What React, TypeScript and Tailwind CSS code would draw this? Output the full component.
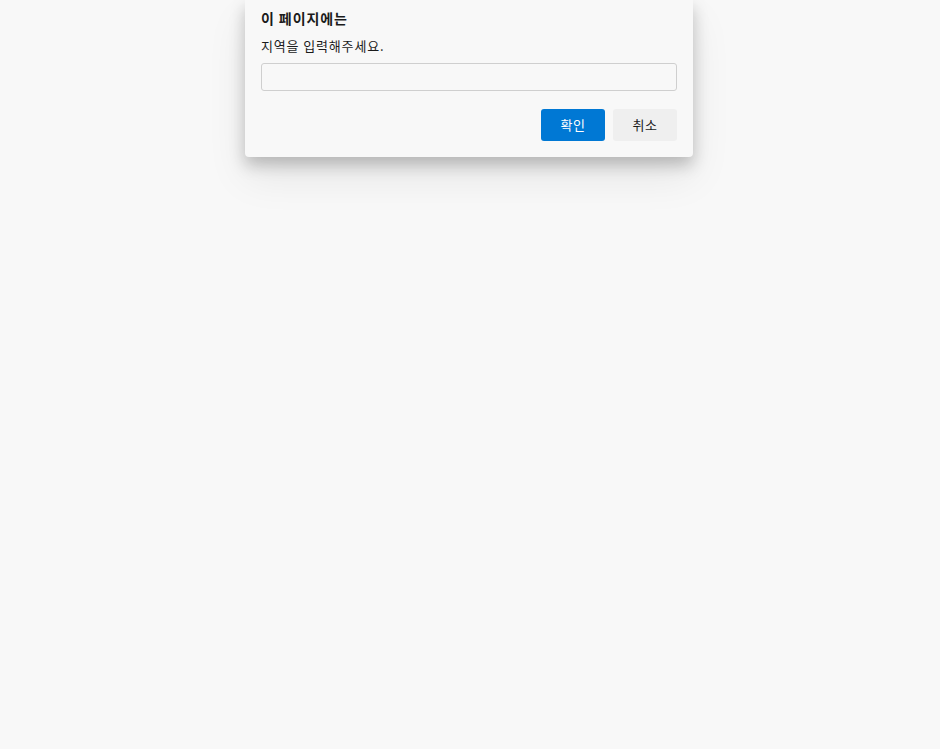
import React from 'react';

function App() {
    return (
        <div className="min-h-[749px] w-full bg-[#f8f8f8] flex justify-center" style={{ fontFamily: '"Noto Sans CJK KR", "Noto Sans", sans-serif' }}>
            <div className="w-[448px] h-[157px] bg-[#f8f8f8] rounded-b-[4px] px-4 pt-[8px] shadow-[0_8px_16px_rgba(0,0,0,0.22),0_20px_40px_rgba(0,0,0,0.08)] ml-[-2px]">
                <p className="text-[14px] font-bold text-[#1b1b1b] leading-[20px] tracking-[0.9px]">이 페이지에는</p>
                <p className="text-[13px] text-[#1b1b1b] leading-[18px] mt-[9px] tracking-[0.85px]">지역을 입력해주세요.</p>
                <input className="mt-[8px] w-full h-[28px] border border-[#cfcfcf] rounded-[3px] bg-[#f8f8f8] outline-none px-2 text-[13px]" />
                <div className="flex justify-end gap-2 mt-[18px]">
                    <button className="w-16 h-8 rounded-[3px] bg-[#0078d4] text-white text-[13px] tracking-[0.5px]">확인</button>
                    <button className="w-16 h-8 rounded-[3px] bg-[#efefef] text-[#1b1b1b] text-[13px] tracking-[0.5px]">취소</button>
                </div>
            </div>
        </div>
    );
}

export default App;
